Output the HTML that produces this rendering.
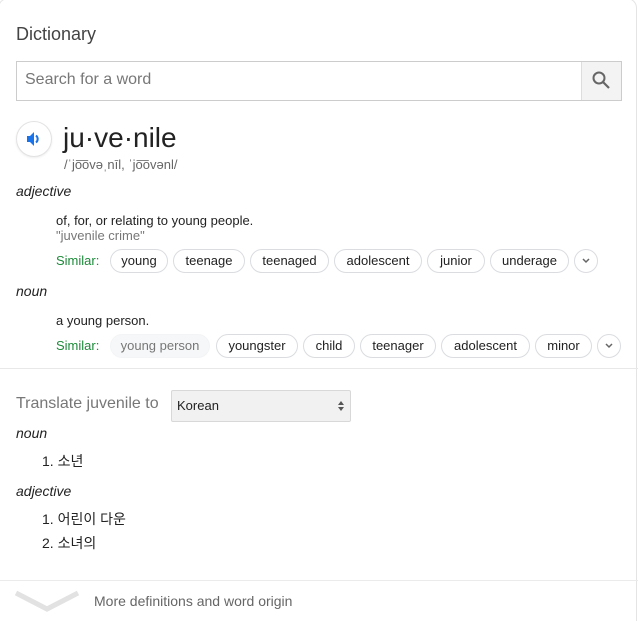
<!DOCTYPE html>
<html><head><meta charset="utf-8"><style>
*{margin:0;padding:0;box-sizing:border-box}
html,body{width:638px;height:621px;overflow:hidden}
body{background:#fff;font-family:"Liberation Sans","Noto Sans CJK KR",sans-serif;position:relative;color:#222}
.a{position:absolute;white-space:nowrap}
.card{position:absolute;left:-2px;top:-2px;width:639px;height:623px;border:1px solid #e4e4e4;border-bottom:none;border-radius:10px 10px 0 0}
.chip{position:absolute;height:24px;border:1px solid #dadce0;border-radius:12px;font-size:13px;line-height:22px;text-align:center;color:#222}
.sim{position:absolute;font-size:13px;color:#1e8a3a}
.ex{position:absolute;width:24px;height:24px;border:1px solid #dadce0;border-radius:12px}
.ex svg{position:absolute;left:6px;top:7px}
.it{font-style:italic;font-size:14px}
</style></head><body>
<div class="card"></div>
<div class="a" style="left:16px;top:24px;font-size:18px;color:#444">Dictionary</div>
<div class="a" style="left:16px;top:61px;width:606px;height:40px;border:1px solid #ccc"></div>
<div class="a" style="left:25px;top:71px;font-size:16px;color:#777">Search for a word</div>
<div class="a" style="left:581px;top:62px;width:40px;height:38px;background:#f3f3f3;border-left:1px solid #ddd"></div>
<svg class="a" style="left:591px;top:70px" width="20" height="20" viewBox="0 0 20 20"><circle cx="8" cy="8" r="5.5" fill="none" stroke="#666" stroke-width="2"/><path d="M12 12l6 6" stroke="#666" stroke-width="2.2"/></svg>
<div class="a" style="left:16px;top:121px;width:36px;height:36px;border-radius:18px;border:1px solid #e2e2e2;box-shadow:0 1px 2px rgba(0,0,0,.08)"></div>
<svg class="a" style="left:25px;top:130px" width="18" height="18" viewBox="0 0 18 18"><path d="M2 6h3l4-4v14l-4-4H2z" fill="#1a73e8"/><path d="M11 5.5a4.5 4.5 0 0 1 0 7" stroke="#1a73e8" stroke-width="2" fill="none"/></svg>
<div class="a" style="left:63px;top:122px;font-size:28px;color:#222">ju·ve·nile</div>
<div class="a" style="left:64px;top:157px;font-size:13px;color:#666">/ˈjo͞ovəˌnīl, ˈjo͞ovənl/</div>
<div class="a it" style="left:16px;top:183px">adjective</div>
<div class="a" style="left:56px;top:213px;font-size:13px">of, for, or relating to young people.</div>
<div class="a" style="left:56px;top:228px;font-size:13px;color:#777">"juvenile crime"</div>
<div class="sim" style="left:56px;top:253px">Similar:</div>
<div class="chip" style="left:110px;top:249px;width:58px">young</div>
<div class="chip" style="left:173px;top:249px;width:72px">teenage</div>
<div class="chip" style="left:250px;top:249px;width:79px">teenaged</div>
<div class="chip" style="left:334px;top:249px;width:88px">adolescent</div>
<div class="chip" style="left:427px;top:249px;width:58px">junior</div>
<div class="chip" style="left:490px;top:249px;width:79px">underage</div>
<div class="ex" style="left:574px;top:249px"><svg width="10" height="8" viewBox="0 0 10 8"><path d="M2 2l3 3 3-3" stroke="#666" stroke-width="1.5" fill="none"/></svg></div>
<div class="a it" style="left:16px;top:283px">noun</div>
<div class="a" style="left:56px;top:313px;font-size:13px">a young person.</div>
<div class="sim" style="left:56px;top:338px">Similar:</div>
<div class="chip" style="left:110px;top:334px;width:100px;border-color:#f3f4f6;background:#f6f7f8;color:#777">young person</div>
<div class="chip" style="left:216px;top:334px;width:82px">youngster</div>
<div class="chip" style="left:303px;top:334px;width:52px">child</div>
<div class="chip" style="left:360px;top:334px;width:76px">teenager</div>
<div class="chip" style="left:441px;top:334px;width:89px">adolescent</div>
<div class="chip" style="left:535px;top:334px;width:57px">minor</div>
<div class="ex" style="left:597px;top:334px"><svg width="10" height="8" viewBox="0 0 10 8"><path d="M2 2l3 3 3-3" stroke="#666" stroke-width="1.5" fill="none"/></svg></div>
<div class="a" style="left:0;top:368px;width:638px;height:1px;background:#e8e8e8"></div>
<div class="a" style="left:16px;top:395px;font-size:16px;color:#777">Translate juvenile to</div>
<div class="a" style="left:171px;top:390px;width:180px;height:32px;background:#f1f1f1;border:1px solid #d8d8d8;border-radius:2px"></div>
<div class="a" style="left:177px;top:398px;font-size:13px;color:#222">Korean</div>
<svg class="a" style="left:337px;top:400px" width="8" height="12" viewBox="0 0 8 12"><path d="M1 5l3-4 3 4zM1 7l3 4 3-4z" fill="#555"/></svg>
<div class="a it" style="left:16px;top:425px;font-size:14px">noun</div>
<div class="a" style="left:42px;top:451px;font-size:14px">1. 소년</div>
<div class="a it" style="left:16px;top:483px;font-size:14px">adjective</div>
<div class="a" style="left:42px;top:509px;font-size:14px">1. 어린이 다운</div>
<div class="a" style="left:42px;top:533px;font-size:14px">2. 소녀의</div>
<div class="a" style="left:0;top:580px;width:638px;height:1px;background:#ebebeb"></div>
<svg class="a" style="left:14px;top:589px" width="66" height="24" viewBox="0 0 66 24"><path d="M2 4l31 16 31-16" stroke="#e2e2e2" stroke-width="5" fill="none"/></svg>
<div class="a" style="left:94px;top:593px;font-size:14px;color:#666">More definitions and word origin</div>
</body></html>
